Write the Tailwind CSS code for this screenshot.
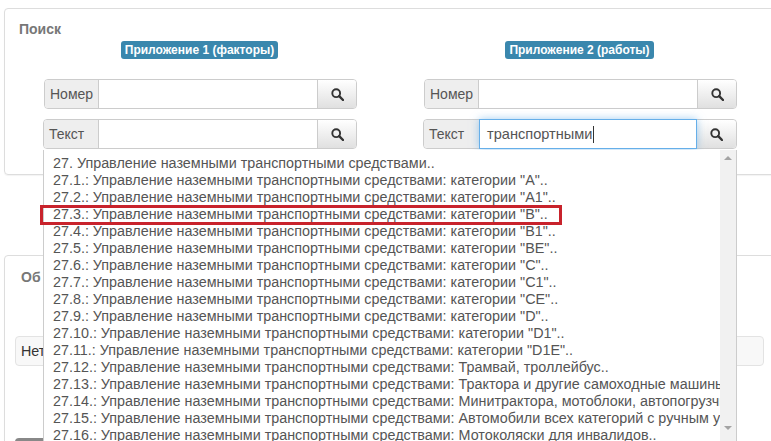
<!DOCTYPE html>
<html><head><meta charset="utf-8"><script src="https://cdn.jsdelivr.net/npm/@tailwindcss/browser@4"></script></head>
<body class="bg-white overflow-hidden font-['Liberation_Sans',Arial,sans-serif] text-[14px] text-[#555]">
<div class="relative w-[771px] h-[441px] overflow-hidden pt-2 pl-1">
  <section class="w-[800px] h-[167px] border border-[#ddd] rounded-[4px] shadow-[0_1px_1px_rgba(0,0,0,0.05)] pt-[12px] pl-[14px]">
    <h3 class="font-bold text-[14px] leading-[16px] text-[#777]">Поиск</h3>
    <div class="flex mt-[4px]">
      <div class="w-[380px] pl-[25px]">
        <div class="w-[313px]">
          <div class="pr-[2px]"><span class="block w-fit mx-auto bg-[#3a87ad] text-white font-bold text-[12px] leading-[18px] px-[4px] rounded-[3px] h-[18px]">Приложение 1 (факторы)</span></div>
          <div class="flex h-[30px] mt-[20px] border border-[#ccc] rounded-[4px] overflow-hidden">
            <span class="w-[54px] bg-[#eee] border-r border-[#ccc] pl-[5px] leading-[28px]">Номер</span>
            <div class="flex-1 bg-white"></div>
            <button class="w-[39px] border-l border-[#ccc] bg-linear-to-b from-white to-[#e0e0e0] flex items-center justify-center">
              <svg width="13" height="13" viewBox="0 0 13 13" fill="none" stroke="#333"><circle cx="5.2" cy="5.2" r="3.9" stroke-width="1.9"/><path d="M8.2 8.2 L12 12" stroke-width="2.4" stroke-linecap="round"/></svg>
            </button>
          </div>
          <div class="flex h-[30px] mt-[10px] -ml-[1px] border border-[#ccc] rounded-[4px] overflow-hidden">
            <span class="w-[55px] bg-[#eee] border-r border-[#ccc] pl-[5px] leading-[28px]">Текст</span>
            <div class="flex-1 bg-white"></div>
            <button class="w-[39px] border-l border-[#ccc] bg-linear-to-b from-white to-[#e0e0e0] flex items-center justify-center">
              <svg width="13" height="13" viewBox="0 0 13 13" fill="none" stroke="#333"><circle cx="5.2" cy="5.2" r="3.9" stroke-width="1.9"/><path d="M8.2 8.2 L12 12" stroke-width="2.4" stroke-linecap="round"/></svg>
            </button>
          </div>
        </div>
      </div>
      <div class="w-[380px] pl-[25px]">
        <div class="w-[313px]">
          <div class="pr-[2px]"><span class="block w-fit mx-auto bg-[#3a87ad] text-white font-bold text-[12px] leading-[18px] px-[4px] rounded-[3px] h-[18px]">Приложение 2 (работы)</span></div>
          <div class="flex h-[30px] mt-[20px] border border-[#ccc] rounded-[4px] overflow-hidden">
            <span class="w-[54px] bg-[#eee] border-r border-[#ccc] pl-[5px] leading-[28px]">Номер</span>
            <div class="flex-1 bg-white"></div>
            <button class="w-[39px] border-l border-[#ccc] bg-linear-to-b from-white to-[#e0e0e0] flex items-center justify-center">
              <svg width="13" height="13" viewBox="0 0 13 13" fill="none" stroke="#333"><circle cx="5.2" cy="5.2" r="3.9" stroke-width="1.9"/><path d="M8.2 8.2 L12 12" stroke-width="2.4" stroke-linecap="round"/></svg>
            </button>
          </div>
          <div class="flex h-[30px] mt-[10px] -ml-[1px] border border-[#ccc] rounded-[4px]">
            <span class="w-[55px] bg-[#eee] rounded-l-[4px] pl-[5px] leading-[28px]">Текст</span>
            <div class="flex-1 bg-white border border-[#66afe9] -my-px shadow-[0_0_8px_rgba(102,175,233,0.6)] relative z-[1] pl-[7px] leading-[28px] text-[14.6px] text-[#555]">транспортными<span class="inline-block w-px h-[17px] bg-[#333] align-[-4px]"></span></div>
            <button class="w-[39px] rounded-r-[4px] bg-linear-to-b from-white to-[#e0e0e0] flex items-center justify-center">
              <svg width="13" height="13" viewBox="0 0 13 13" fill="none" stroke="#333"><circle cx="5.2" cy="5.2" r="3.9" stroke-width="1.9"/><path d="M8.2 8.2 L12 12" stroke-width="2.4" stroke-linecap="round"/></svg>
            </button>
          </div>
        </div>
      </div>
    </div>
  </section>

  <section class="w-[800px] h-[300px] mt-[80px] border border-[#ddd] rounded-[4px] shadow-[0_1px_1px_rgba(0,0,0,0.05)] pt-[13px] pl-[10px]">
    <h3 class="font-bold text-[14px] leading-[16px] text-[#777] pl-[6px]">Об</h3>
    <div class="w-[749px] h-[30px] mt-[51px] bg-[#f8f8f8] border border-[#e3e3e3] rounded-[4px] pl-[5px] leading-[28px] text-[14.3px] text-[#333]">Нет</div>
    <div class="w-[60px] h-[20px] mt-[72px] bg-[#888] rounded-t-[4px]"></div>
  </section>

  <div class="absolute z-10 left-[43px] top-[150px] w-[694px] h-[300px] bg-white border-l border-r border-[#ccc] flex">
    <ul class="flex-1 min-w-0 overflow-hidden pt-[5px] pl-[9px] leading-[17px] text-[14.35px] whitespace-nowrap">
      <li>27. Управление наземными транспортными средствами..</li>
      <li>27.1.: Управление наземными транспортными средствами: категории "A"..</li>
      <li>27.2.: Управление наземными транспортными средствами: категории "A1"..</li>
      <li>27.3.: Управление наземными транспортными средствами: категории "B"..</li>
      <li>27.4.: Управление наземными транспортными средствами: категории "B1"..</li>
      <li>27.5.: Управление наземными транспортными средствами: категории "BE"..</li>
      <li>27.6.: Управление наземными транспортными средствами: категории "C"..</li>
      <li>27.7.: Управление наземными транспортными средствами: категории "C1"..</li>
      <li>27.8.: Управление наземными транспортными средствами: категории "CE"..</li>
      <li>27.9.: Управление наземными транспортными средствами: категории "D"..</li>
      <li>27.10.: Управление наземными транспортными средствами: категории "D1"..</li>
      <li>27.11.: Управление наземными транспортными средствами: категории "D1E"..</li>
      <li>27.12.: Управление наземными транспортными средствами: Трамвай, троллейбус..</li>
      <li>27.13.: Управление наземными транспортными средствами: Трактора и другие самоходные машины..</li>
      <li>27.14.: Управление наземными транспортными средствами: Минитрактора, мотоблоки, автопогрузчики..</li>
      <li>27.15.: Управление наземными транспортными средствами: Автомобили всех категорий с ручным управлением..</li>
      <li>27.16.: Управление наземными транспортными средствами: Мотоколяски для инвалидов..</li>
    </ul>
    <div class="w-[16px] shrink-0 bg-[#f1f1f1] flex flex-col items-center justify-between pt-[6px] pb-[11px] h-[291px]">
      <span class="w-0 h-0 border-x-[4px] border-x-transparent border-b-[4px] border-b-[#a3a3a3]"></span>
      <span class="w-0 h-0 border-x-[4px] border-x-transparent border-t-[4px] border-t-[#a3a3a3]"></span>
    </div>
  </div>
  <div class="absolute z-20 left-[40px] top-[205px] w-[522px] h-[20px] border-[3px] border-[#c8232c]"></div>
</div>
</body></html>
